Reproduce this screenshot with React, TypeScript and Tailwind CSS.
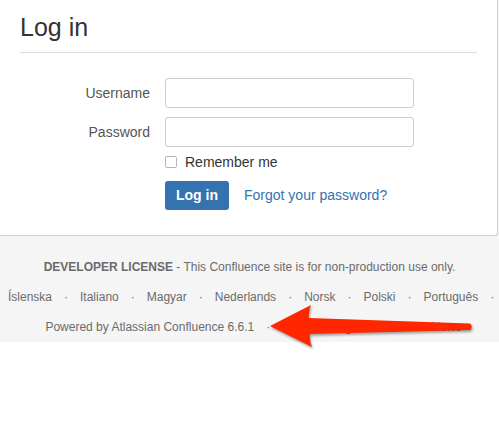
import React from 'react';

const languages = ['Íslenska', 'Italiano', 'Magyar', 'Nederlands', 'Norsk', 'Polski', 'Português'];

function Sep() {
  return <span className="mx-3 text-[#707070]">·</span>;
}

export default function App() {
  return (
    <div className="relative w-[499px] h-[432px] overflow-hidden bg-white font-['Liberation_Sans',Arial,sans-serif]">
      <div className="bg-[#f5f5f5]">
        {/* login panel */}
        <section className="w-[498px] bg-white border-r border-b border-[#cfcfcf] rounded-br-[3px] px-5 pt-3 pb-[25px]">
          <h1 className="text-[25px] leading-[30px] text-[#333]">Log in</h1>
          <div className="mt-[10px] h-px bg-[#dcdcdc]" />

          <form className="mt-[25px]" onSubmit={(e) => e.preventDefault()}>
            <div className="flex items-center">
              <label className="w-[130px] text-right text-[14px] text-[#555]">Username</label>
              <input className="ml-[15px] w-[249px] h-[30px] rounded-[3px] border border-[#ccc] bg-white outline-none" />
            </div>
            <div className="flex items-center mt-[9px]">
              <label className="w-[130px] text-right text-[14px] text-[#555]">Password</label>
              <input type="password" className="ml-[15px] w-[249px] h-[30px] rounded-[3px] border border-[#ccc] bg-white outline-none" />
            </div>
            <div className="flex items-center h-3 mt-[9px] pl-[145px]">
              <span className="w-3 h-3 rounded-[2px] border border-[#b5b5b5] bg-white" />
              <span className="ml-2 text-[14px] leading-none text-[#333]">Remember me</span>
            </div>
            <div className="flex items-center mt-[13px] pl-[145px]">
              <button className="w-[64px] h-[29px] rounded-[3px] bg-[#3572b0] text-white text-[14px] font-bold">Log in</button>
              <a className="ml-[15px] text-[14px] text-[#3572b0]">Forgot your password?</a>
            </div>
          </form>
        </section>

        {/* footer */}
        <footer className="pt-4 text-[12px] leading-[30px] text-[#6b6b6b]">
          <p className="text-center">
            <b>DEVELOPER LICENSE</b> - This Confluence site is for non-production use only.
          </p>
          <div className="flex whitespace-nowrap pl-2">
            {languages.map((l, i) => (
              <span key={l}>
                {i > 0 && <Sep />}
                {l}
              </span>
            ))}
            <Sep />
          </div>
          <div className="flex justify-center whitespace-nowrap pl-2">
            <span>Powered by Atlassian Confluence 6.6.1</span>
            <Sep />
            <span>Report a bug</span>
            <Sep />
            <span>Atlassian News</span>
          </div>
        </footer>
      </div>

      {/* annotation arrow */}
      <svg className="absolute left-0 top-0 pointer-events-none drop-shadow-[1px_2px_1px_rgba(0,0,0,0.35)]" width="499" height="432" viewBox="0 0 499 432">
        <path
          d="M270 326 L311 305 Q308 312 309 318 L470 323.5 Q473.5 326.5 470 330 L310 334 Q309 340 312 347 Z"
          fill="#ff2600"
        />
      </svg>
    </div>
  );
}
